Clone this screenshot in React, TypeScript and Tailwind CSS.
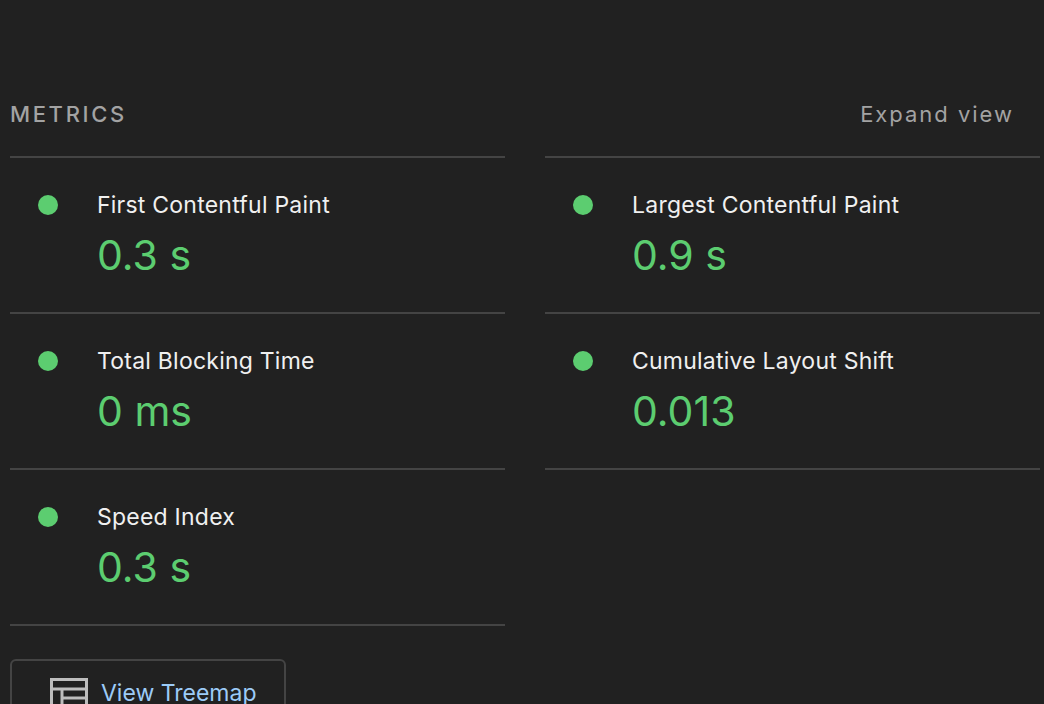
const left = [
  { t: 'First Contentful Paint', v: '0.3 s' },
  { t: 'Total Blocking Time', v: '0 ms' },
  { t: 'Speed Index', v: '0.3 s' },
];
const right = [
  { t: 'Largest Contentful Paint', v: '0.9 s' },
  { t: 'Cumulative Layout Shift', v: '0.013' },
];

function Metric({ t, v }: { t: string; v: string }) {
  return (
    <div className="h-[156px] border-t-2 border-[#444] flex pt-[33px] pl-[28px]">
      <div className="w-5 h-5 rounded-full bg-[#5ccd70] mt-[4px] shrink-0" />
      <div className="ml-[39px]">
        <div className="text-[23px] leading-[28px] text-[#f0f0f0] tracking-[0.01em]">{t}</div>
        <div className="text-[41px] leading-[52px] text-[#5ccd70] mt-[10px]">{v}</div>
      </div>
    </div>
  );
}

export default function App() {
  return (
    <div className="w-[1044px] h-[704px] overflow-hidden bg-[#212121] pl-[10px] pr-[4px] pt-[98px]" style={{ fontFamily: 'Inter, "Noto Sans", sans-serif' }}>
      <div className="flex justify-between items-center h-[32px] text-[22px] text-[#a3a3a3] pr-[26px]">
        <span className="font-medium tracking-[0.12em]">METRICS</span>
        <span className="tracking-[0.09em]">Expand view</span>
      </div>
      <div className="grid grid-cols-2 gap-x-[40px] mt-[26px]">
        <div className="border-b-2 border-[#444]">
          {left.map((m) => <Metric key={m.t} {...m} />)}
        </div>
        <div className="self-start border-b-2 border-[#444]">
          {right.map((m) => <Metric key={m.t} {...m} />)}
        </div>
      </div>
      <div className="mt-[33px] w-[276px] h-[60px] border-2 border-[#444] rounded-md flex items-start pt-[17px] pl-[38px] gap-[13px]">
        <svg width="38" height="30" viewBox="0 0 38 30" className="shrink-0">
          <rect x="1.5" y="1.5" width="35" height="27" fill="none" stroke="#bdbdbd" strokeWidth="3" />
          <line x1="1.5" y1="11" x2="36.5" y2="11" stroke="#bdbdbd" strokeWidth="3" />
          <line x1="12" y1="20" x2="36.5" y2="20" stroke="#bdbdbd" strokeWidth="3" />
          <line x1="12" y1="11" x2="12" y2="28" stroke="#bdbdbd" strokeWidth="3" />
        </svg>
        <span className="text-[23px] leading-[30px] text-[#9ccbf7]">View Treemap</span>
      </div>
    </div>
  );
}
